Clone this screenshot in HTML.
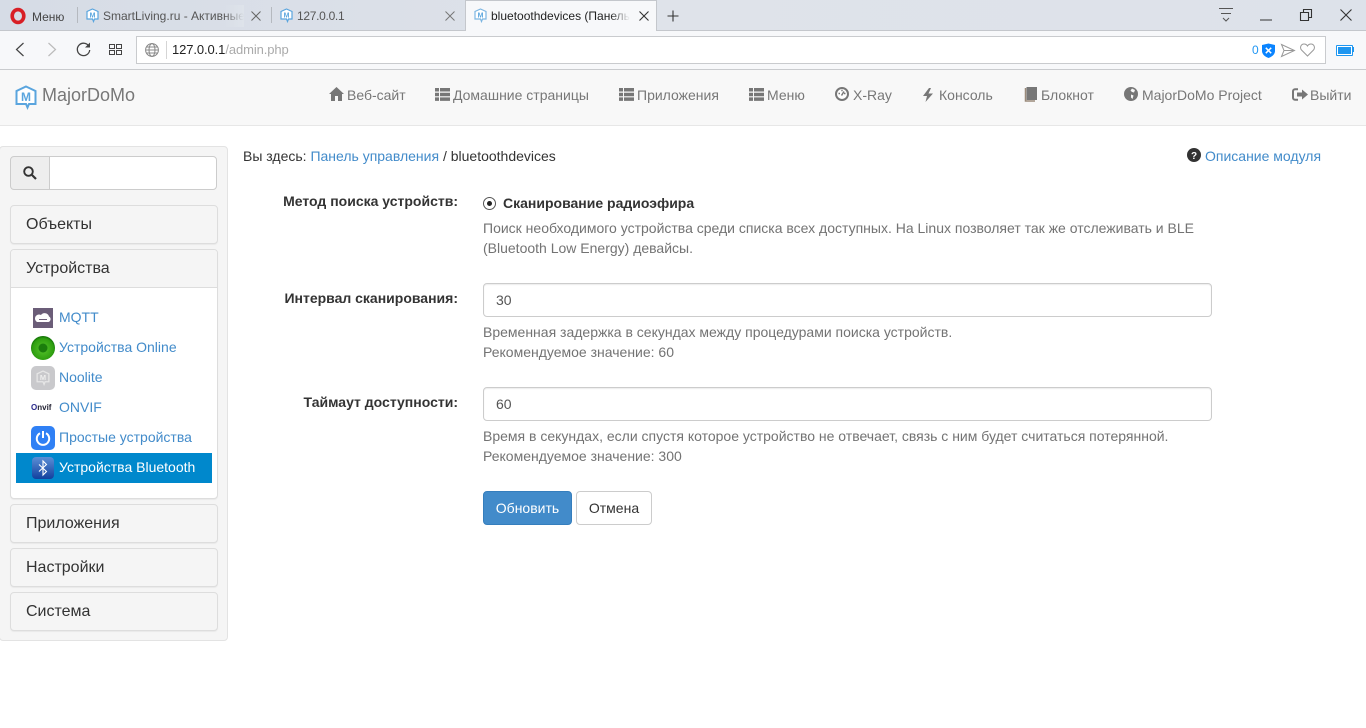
<!DOCTYPE html>
<html lang="ru"><head><meta charset="utf-8"><title>bluetoothdevices</title>
<style>
html,body{margin:0;padding:0;width:1366px;height:728px;overflow:hidden;background:#fff;font:14px/20px "Liberation Sans",sans-serif;color:#333}
.a{position:absolute;white-space:nowrap}
svg{position:absolute;display:block;overflow:visible}
a{color:#428bca;text-decoration:none}
.nav{color:#777;top:85px}
.tab{font-size:12px;color:#555;top:6px}
.panel{position:absolute;left:10px;width:206px;background:#f5f5f5;border:1px solid #ddd;border-radius:4px;box-shadow:0 1px 1px rgba(0,0,0,.05)}
.pt{position:absolute;left:26px;font-size:16px;color:#333}
.lbl{font-weight:bold;right:908px}
.help{color:#737373;left:483px}
.inp{position:absolute;left:483px;width:727px;height:32px;border:1px solid #ccc;border-radius:4px;background:#fff;box-shadow:inset 0 1px 1px rgba(0,0,0,.075);line-height:32px;text-indent:12px;color:#555}
.it{left:59px}
</style></head><body>

<!-- browser chrome -->
<div class="a" style="left:0;top:0;width:1366px;height:31px;background:linear-gradient(90deg,#d6dce6,#dfe3ea 50%,#dde2ea)"></div>
<div class="a" style="left:0;top:30px;width:1366px;height:1px;background:#c4c7cc"></div>
<div class="a" style="left:0;top:31px;width:1366px;height:38px;background:#f7f8fa"></div>
<div class="a" style="left:0;top:69px;width:1366px;height:1px;background:#c9cbce"></div>
<svg style="left:10px;top:8px" width="16" height="16" viewBox="0 0 16 16"><ellipse cx="8" cy="8" rx="5.800" ry="6.400" fill="none" stroke="#d81f26" stroke-width="3.600"/></svg>
<div class="a" style="left:32px;top:7px;font-size:12px;color:#444">Меню</div>
<div class="a" style="left:77px;top:7px;width:1px;height:16px;background:#b5b9bf"></div>
<div class="a" style="left:271px;top:7px;width:1px;height:16px;background:#b5b9bf"></div>
<svg style="left:86px;top:8px" width="13" height="15" viewBox="0 0 13 15"><path d="M6.500 1L12 3.500V11H8.500L7.500 13.500 6.500 11H1V3.500Z" fill="#fff" stroke="#5aa5de" stroke-width="1.200"/><text x="6.500" y="9.500" font-size="7" font-weight="bold" text-anchor="middle" fill="#5aa5de" font-family="Liberation Sans">M</text></svg>
<div class="a tab" style="left:103px;width:141px;overflow:hidden">SmartLiving.ru - Активные</div>
<div class="a" style="left:224px;top:5px;width:20px;height:22px;background:linear-gradient(90deg,rgba(222,227,234,0),#dee3ea)"></div>
<svg style="left:251px;top:11px" width="10" height="10"><path d="M.5.5l9 9M9.500.5l-9 9" stroke="#666" stroke-width="1"/></svg>
<svg style="left:280px;top:8px" width="13" height="15" viewBox="0 0 13 15"><path d="M6.500 1L12 3.500V11H8.500L7.500 13.500 6.500 11H1V3.500Z" fill="#fff" stroke="#5aa5de" stroke-width="1.200"/><text x="6.500" y="9.500" font-size="7" font-weight="bold" text-anchor="middle" fill="#5aa5de" font-family="Liberation Sans">M</text></svg>
<div class="a tab" style="left:297px;letter-spacing:-.3px">127.0.0.1</div>
<svg style="left:445px;top:11px" width="10" height="10"><path d="M.5.5l9 9M9.500.5l-9 9" stroke="#777" stroke-width="1"/></svg>
<!-- active tab -->
<div class="a" style="left:465px;top:0;width:192px;height:31px;background:#f7f8fa;border-left:1px solid #c4c7cc;border-right:1px solid #c4c7cc;box-sizing:border-box;border-top:1px solid #c4c7cc"></div>
<svg style="left:474px;top:8px" width="13" height="15" viewBox="0 0 13 15"><path d="M6.500 1L12 3.500V11H8.500L7.500 13.500 6.500 11H1V3.500Z" fill="#fff" stroke="#7db6e2" stroke-width="1.200"/><text x="6.500" y="9.500" font-size="7" font-weight="bold" text-anchor="middle" fill="#5aa5de" font-family="Liberation Sans">M</text></svg>
<div class="a tab" style="left:491px;width:139px;overflow:hidden;color:#222">bluetoothdevices (Панель</div>
<div class="a" style="left:610px;top:5px;width:20px;height:22px;background:linear-gradient(90deg,rgba(247,248,250,0),#f7f8fa)"></div>
<svg style="left:639px;top:11px" width="10" height="10"><path d="M.5.5l9 9M9.500.5l-9 9" stroke="#333" stroke-width="1.100"/></svg>
<svg style="left:667px;top:10px" width="12" height="12"><path d="M6 .5v11M.5 6h11" stroke="#333" stroke-width="1.100"/></svg>
<!-- window controls -->
<svg style="left:1219px;top:8px" width="14" height="14"><path d="M0 .5h14M2 5.500h10M4 10l3 3 3-3" fill="none" stroke="#555" stroke-width="1"/></svg>
<svg style="left:1260px;top:19px" width="12" height="2"><path d="M0 1h12" stroke="#333" stroke-width="1"/></svg>
<svg style="left:1300px;top:9px" width="12" height="12"><path d="M.5 3.500h8v8h-8zM3.500 3.500v-3h8v8h-3" fill="none" stroke="#333" stroke-width="1.100"/></svg>
<svg style="left:1340px;top:9px" width="12" height="12"><path d="M.5.5l11 11M11.500.5l-11 11" stroke="#333" stroke-width="1.100"/></svg>
<!-- toolbar -->
<svg style="left:15px;top:42px" width="10" height="15"><path d="M8.500 1L1.500 7.500 8.500 14" fill="none" stroke="#444" stroke-width="1.200"/></svg>
<svg style="left:47px;top:42px" width="10" height="15"><path d="M1.500 1L8.500 7.500 1.500 14" fill="none" stroke="#bbb" stroke-width="1.200"/></svg>
<svg style="left:76px;top:42px" width="15" height="15" viewBox="0 0 15 15"><path d="M13 4.500A6.200 6.200 0 1 0 13.700 8" fill="none" stroke="#444" stroke-width="1.300"/><path d="M14 .5v5h-5z" fill="#444"/></svg>
<svg style="left:109px;top:44px" width="13" height="11"><path d="M.5.5h5v4h-5zM7.500.5h5v4h-5zM.5 6.500h5v4h-5zM7.500 6.500h5v4h-5z" fill="none" stroke="#444" stroke-width="1"/></svg>
<div class="a" style="left:136px;top:36px;width:1190px;height:28px;background:#fff;border:1px solid #c9cbce;box-sizing:border-box"></div>
<svg style="left:145px;top:43px" width="14" height="14" viewBox="0 0 14 14"><g fill="none" stroke="#888" stroke-width="1"><circle cx="7" cy="7" r="6.400"/><ellipse cx="7" cy="7" rx="3" ry="6.400"/><path d="M.6 7h12.800M1.400 4h11.200M1.400 10h11.200"/></g></svg>
<div class="a" style="left:166px;top:41px;width:1px;height:18px;background:#d5d5d5"></div>
<div class="a" style="left:172px;top:40px;font-size:13px;letter-spacing:-.1px;color:#222">127.0.0.1<span style="color:#aaa">/admin.php</span></div>
<div class="a" style="left:1252px;top:40px;font-size:12px;color:#2196f3">0</div>
<svg style="left:1261px;top:43px" width="15" height="15" viewBox="0 0 15 15"><path d="M7.500 0.500L14 2V8C14 11.500 10.500 14 7.500 15 4.500 14 1 11.500 1 8V2Z" fill="#0a84ff"/><path d="M4.800 4.800l5.400 5.400M10.200 4.800l-5.400 5.400" stroke="#fff" stroke-width="1.500"/></svg>
<svg style="left:1281px;top:44px" width="14" height="13"><path d="M.5.5L13.500 6.500 .5 12.500 3 6.500ZM3 6.500H13.500" fill="none" stroke="#999" stroke-width="1"/></svg>
<svg style="left:1300px;top:43px" width="15" height="14" viewBox="0 0 15 14"><path d="M7.500 13L1.500 7C-.5 4.500 1 1 4 1c1.500 0 2.800.8 3.500 2C8.200 1.800 9.500 1 11 1c3 0 4.500 3.500 2.500 6Z" fill="none" stroke="#999" stroke-width="1"/></svg>
<div class="a" style="left:1336px;top:45px;width:15px;height:9px;border:1px solid #1e96f0;background:#1e96f0;box-shadow:inset 0 0 0 1px #fff;border-radius:1px"></div>
<div class="a" style="left:1353px;top:47px;width:1px;height:5px;background:#1e96f0"></div>

<!-- navbar -->
<div class="a" style="left:0;top:70px;width:1366px;height:55px;background:#f8f8f8;border-bottom:1px solid #e7e7e7"></div>
<svg style="left:15px;top:85px" width="22" height="24" viewBox="0 0 22 24"><path d="M11 1.500L20.500 6V19H14L12.500 22.500 11 19H1.500V6Z" fill="#fff" stroke="#5aa5de" stroke-width="2"/><text x="11" y="16" font-size="12" font-weight="bold" text-anchor="middle" fill="#5aa5de" font-family="Liberation Sans">M</text></svg>
<div class="a" style="left:42px;top:85px;font-size:18px;color:#777">MajorDoMo</div>

<svg style="left:329px;top:87px" width="15" height="14" viewBox="0 0 15 14"><path d="M7.500 0L15 7H13V14H9V9H6V14H2V7H0Z" fill="#777"/></svg>
<div class="a nav" style="left:347px">Веб-сайт</div>
<svg style="left:435px;top:88px" width="15" height="13"><path d="M0 0h4v3.500H0zM5 0h10v3.500H5zM0 4.700h4v3.500H0zM5 4.700h10v3.500H5zM0 9.400h4v3.500H0zM5 9.400h10v3.500H5z" fill="#777"/></svg>
<div class="a nav" style="left:453px">Домашние страницы</div>
<svg style="left:619px;top:88px" width="15" height="13"><path d="M0 0h4v3.500H0zM5 0h10v3.500H5zM0 4.700h4v3.500H0zM5 4.700h10v3.500H5zM0 9.400h4v3.500H0zM5 9.400h10v3.500H5z" fill="#777"/></svg>
<div class="a nav" style="left:637px">Приложения</div>
<svg style="left:749px;top:88px" width="15" height="13"><path d="M0 0h4v3.500H0zM5 0h10v3.500H5zM0 4.700h4v3.500H0zM5 4.700h10v3.500H5zM0 9.400h4v3.500H0zM5 9.400h10v3.500H5z" fill="#777"/></svg>
<div class="a nav" style="left:767px">Меню</div>
<svg style="left:835px;top:87px" width="14" height="14" viewBox="0 0 14 14"><circle cx="7" cy="7" r="6" fill="#fff" stroke="#777" stroke-width="2"/><path d="M3.500 6.500h1.500M9 6.500h1.500M6.300 3.500h1.400M6.500 8.500L9 4.500" stroke="#777" stroke-width="1.500"/></svg>
<div class="a nav" style="left:853px">X-Ray</div>
<svg style="left:923px;top:88px" width="10" height="14"><path d="M6 0L0 8H4L2.500 14 10 5.500H5.500L8 0Z" fill="#777"/></svg>
<div class="a nav" style="left:939px">Консоль</div>
<svg style="left:1024px;top:87px" width="13" height="15"><path d="M2.500 0H13V13H2.500Z" fill="#777"/><path d="M1.500 1V14H11" fill="none" stroke="#9a8a7a" stroke-width="1.500"/></svg>
<div class="a nav" style="left:1041px">Блокнот</div>
<svg style="left:1124px;top:87px" width="14" height="14" viewBox="0 0 14 14"><circle cx="7" cy="7" r="7" fill="#777"/><path d="M8 1.500L11 3 10 5.500 8 5 6.500 3.500ZM7 7.500L9.500 8.500 8.500 12 7 10.500Z" fill="#f8f8f8"/></svg>
<div class="a nav" style="left:1142px">MajorDoMo Project</div>
<svg style="left:1292px;top:88px" width="16" height="13" viewBox="0 0 16 13"><path d="M6 1.200H3A2 2 0 0 0 1 3.200V9.800A2 2 0 0 0 3 11.800H6" fill="none" stroke="#777" stroke-width="2"/><path d="M5 4.500H10V1.500L16 6.500 10 11.500V8.500H5Z" fill="#777"/></svg>
<div class="a nav" style="left:1310px">Выйти</div>

<!-- sidebar -->
<div class="a" style="left:-1px;top:146px;width:227px;height:493px;background:#f5f5f5;border:1px solid #e3e3e3;border-radius:4px"></div>
<div class="a" style="left:10px;top:156px;width:38px;height:32px;background:#eee;border:1px solid #ccc;border-radius:4px 0 0 4px"></div>
<svg style="left:23px;top:166px" width="14" height="14" viewBox="0 0 14 14"><circle cx="5.500" cy="5.500" r="4.300" fill="none" stroke="#333" stroke-width="1.900"/><path d="M9 9l4 4" stroke="#333" stroke-width="2.200"/></svg>
<div class="a" style="left:49px;top:156px;width:166px;height:32px;background:#fff;border:1px solid #ccc;border-radius:0 4px 4px 0"></div>

<div class="panel" style="top:205px;height:37px"></div>
<div class="a pt" style="top:215px">Объекты</div>
<div class="panel" style="top:249px;height:248px;background:#fff"></div>
<div class="a" style="left:11px;top:250px;width:206px;height:37px;background:#f5f5f5;border-bottom:1px solid #ddd;border-radius:3px 3px 0 0"></div>
<div class="a pt" style="top:259px">Устройства</div>

<svg style="left:33px;top:308px" width="20" height="20" viewBox="0 0 20 20"><rect width="20" height="20" fill="#6b5d78"/><path d="M4 14H15.500A3 3 0 0 0 16 8.500 4.500 4.500 0 0 0 8 7 3.500 3.500 0 0 0 4 14Z" fill="#fff"/><path d="M6 11.500h8" stroke="#6b5d78" stroke-width="1"/></svg>
<div class="a it" style="top:307px"><a>MQTT</a></div>
<svg style="left:31px;top:336px" width="24" height="24" viewBox="0 0 24 24"><defs><radialGradient id="g" cx=".5" cy=".55" r=".55"><stop offset="0" stop-color="#57c52c"/><stop offset=".8" stop-color="#2f9f10"/><stop offset="1" stop-color="#0d6e04"/></radialGradient></defs><circle cx="12" cy="12" r="12" fill="url(#g)"/><circle cx="12" cy="12" r="4.500" fill="#1b7d0c"/></svg>
<div class="a it" style="top:337px"><a>Устройства Online</a></div>
<div class="a" style="left:31px;top:366px;width:24px;height:24px;background:#c9c9cc;border-radius:5px"></div>
<svg style="left:36px;top:370px" width="14" height="16" viewBox="0 0 13 15"><path d="M6.500 1L12 3.500V11H8.500L7.500 13.500 6.500 11H1V3.500Z" fill="none" stroke="#e6e6e6" stroke-width="1.200"/><text x="6.500" y="9.500" font-size="7" font-weight="bold" text-anchor="middle" fill="#eee" font-family="Liberation Sans">M</text></svg>
<div class="a it" style="top:367px"><a>Noolite</a></div>
<div class="a" style="left:31px;top:403px;font-size:8px;line-height:10px;font-weight:bold;color:#223;font-family:'Liberation Sans',sans-serif"><span style="color:#2a2a8c">O</span>nvif</div>
<div class="a it" style="top:397px"><a>ONVIF</a></div>
<div class="a" style="left:31px;top:426px;width:24px;height:24px;background:#2f80f5;border-radius:5px"></div>
<svg style="left:35px;top:430px" width="16" height="16" viewBox="0 0 16 16"><path d="M5 3.200A6.200 6.200 0 1 0 11 3.200" fill="none" stroke="#fff" stroke-width="2"/><path d="M8 1v7" stroke="#fff" stroke-width="2"/></svg>
<div class="a it" style="top:427px"><a>Простые устройства</a></div>
<div class="a" style="left:16px;top:453px;width:196px;height:30px;background:#0088cc"></div>
<div class="a" style="left:32px;top:457px;width:22px;height:22px;background:linear-gradient(#5b8fd6,#12409e);border-radius:4px"></div>
<svg style="left:38px;top:460px" width="10" height="16" viewBox="0 0 10 16"><path d="M1 4.500L8.500 11.500 5 15V1L8.500 4.500 1 11.500" fill="none" stroke="#fff" stroke-width="1.100"/></svg>
<div class="a it" style="top:457px;color:#fff">Устройства Bluetooth</div>

<div class="panel" style="top:504px;height:37px"></div>
<div class="a pt" style="top:514px">Приложения</div>
<div class="panel" style="top:548px;height:37px"></div>
<div class="a pt" style="top:558px">Настройки</div>
<div class="panel" style="top:592px;height:37px"></div>
<div class="a pt" style="top:602px">Система</div>

<!-- content -->
<div class="a" style="left:243px;top:146px">Вы здесь: <a>Панель управления</a> / bluetoothdevices</div>
<svg style="left:1187px;top:148px" width="14" height="14" viewBox="0 0 14 14"><circle cx="7" cy="7" r="7" fill="#333"/><text x="7" y="11" font-size="10" font-weight="bold" text-anchor="middle" fill="#fff" font-family="Liberation Sans">?</text></svg>
<div class="a" style="left:1205px;top:146px"><a>Описание модуля</a></div>

<div class="a lbl" style="top:191px">Метод поиска устройств:</div>
<svg style="left:483px;top:197px" width="13" height="13"><circle cx="6.500" cy="6.500" r="6" fill="#fff" stroke="#555" stroke-width="1"/><circle cx="6.500" cy="6.500" r="2.500" fill="#222"/></svg>
<div class="a" style="left:503px;top:193px;font-weight:bold">Сканирование радиоэфира</div>
<div class="a help" style="top:218px">Поиск необходимого устройства среди списка всех доступных. На Linux позволяет так же отслеживать и BLE</div>
<div class="a help" style="top:238px">(Bluetooth Low Energy) девайсы.</div>

<div class="a lbl" style="top:288px">Интервал сканирования:</div>
<div class="inp" style="top:283px">30</div>
<div class="a help" style="top:322px">Временная задержка в секундах между процедурами поиска устройств.</div>
<div class="a help" style="top:342px">Рекомендуемое значение: 60</div>

<div class="a lbl" style="top:392px">Таймаут доступности:</div>
<div class="inp" style="top:387px">60</div>
<div class="a help" style="top:426px">Время в секундах, если спустя которое устройство не отвечает, связь с ним будет считаться потерянной.</div>
<div class="a help" style="top:446px">Рекомендуемое значение: 300</div>

<div class="a" style="left:483px;top:491px;width:87px;height:32px;line-height:32px;text-align:center;background:#428bca;border:1px solid #357ebd;border-radius:4px;color:#fff">Обновить</div>
<div class="a" style="left:576px;top:491px;width:74px;height:32px;line-height:32px;text-align:center;background:#fff;border:1px solid #ccc;border-radius:4px;color:#333">Отмена</div>
</body></html>
